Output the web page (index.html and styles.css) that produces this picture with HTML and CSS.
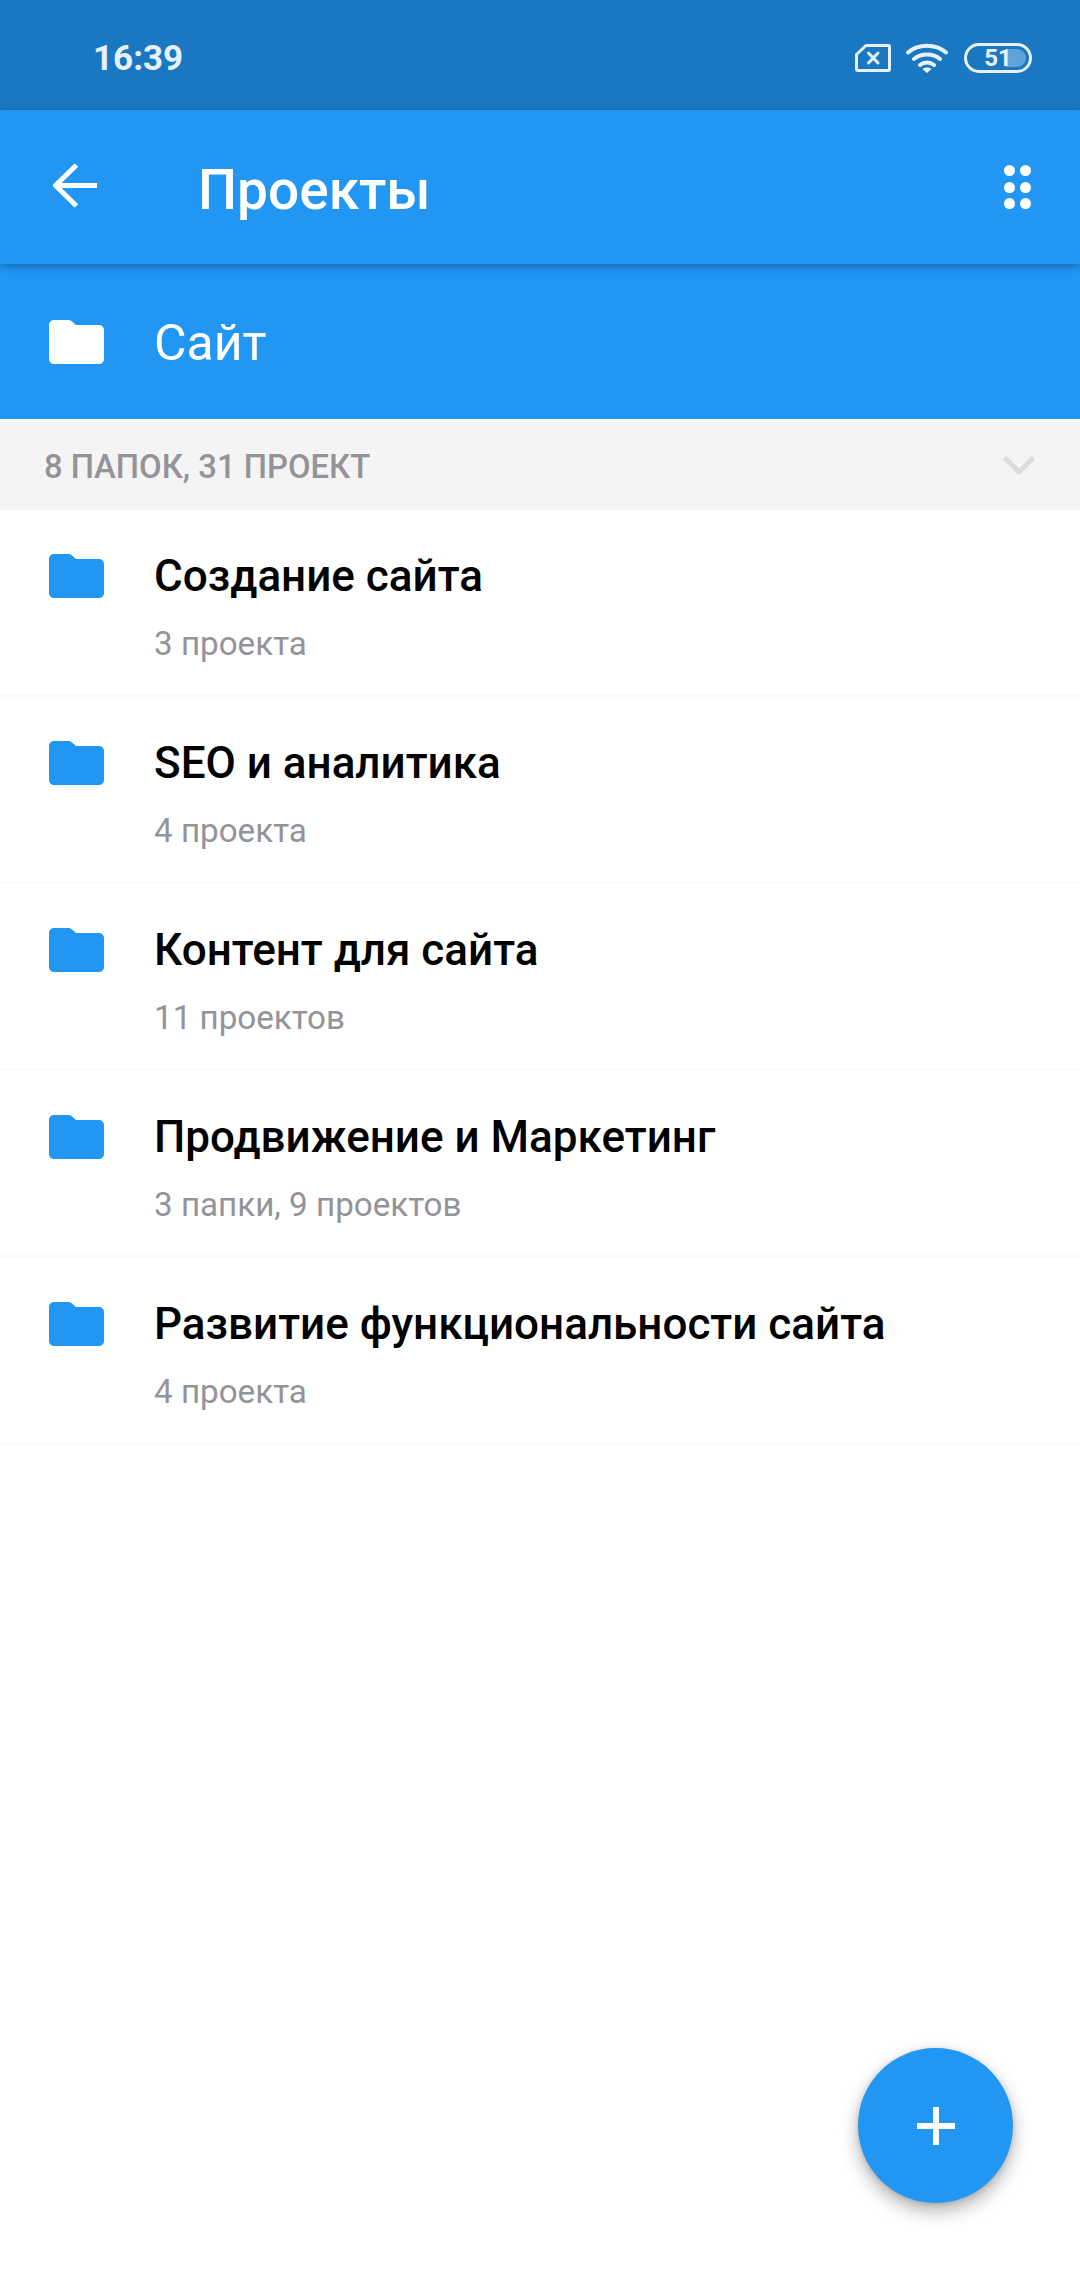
FILE: index.html
```html
<!doctype html>
<html lang="ru">
<head>
	<meta charset="UTF-8">
	<meta name="viewport" content="initial-scale=1,maximum-scale=1, user-scalable=no">
	<title>Проекты</title>
	<link rel="stylesheet" href="styles.css">
</head>
<body>
	<svg class="defs" width="0" height="0">
		<symbol id="folder" viewBox="0 0 55 44">
			<path d="M5 0h14c2 0 3 .6 4.300 1.800L27 5h23c2.800 0 5 2.200 5 5v29c0 2.800-2.200 5-5 5H5c-2.800 0-5-2.200-5-5V5c0-2.800 2.200-5 5-5z"/>
		</symbol>
	</svg>
	<div class="wrap">
		<div class="status-bar">
			<span class="time">16:39</span>
			<div class="status-icons">
				<svg class="ic-sim" width="36" height="28" viewBox="0 0 36 28">
					<path d="M11 1.500h22c.8 0 1.500.7 1.500 1.500v22c0 .8-.7 1.500-1.500 1.500H3c-.8 0-1.500-.7-1.500-1.500V10.500z" fill="none" stroke="#e8f1f9" stroke-width="3" stroke-linejoin="round"/>
					<path d="M13.500 9l9.500 10M23 9l-9.500 10" stroke="#e8f1f9" stroke-width="3" stroke-linecap="round"/>
				</svg>
				<svg class="ic-wifi" width="42" height="30" viewBox="0 0 42 30">
					<path d="M2 9.500C12.500 .5 29.500 .5 40 9.500M8 16C15 10 27 10 34 16M14 22c4-3.200 10-3.200 14 0" fill="none" stroke="#e8f1f9" stroke-width="4" stroke-linecap="round"/>
					<path d="M21 30l-4.500-4c2.500-2 6.500-2 9 0z" fill="#e8f1f9"/>
				</svg>
				<div class="battery">
					<div class="battery-fill"></div>
					<span class="battery-num">51</span>
				</div>
			</div>
		</div>

		<div class="toolbar">
			<svg class="ic-back" width="44" height="44" viewBox="0 0 44 44">
				<path d="M2 21.500h42M23.500 1L2.500 21.500 23.500 42" fill="none" stroke="#fff" stroke-width="5"/>
			</svg>
			<h1 class="toolbar-title">Проекты</h1>
			<div class="dots">
				<i></i><i></i><i></i><i></i><i></i><i></i>
			</div>
		</div>

		<div class="current-folder">
			<svg class="folder-icon"><use href="#folder"/></svg>
			<span class="current-name">Сайт</span>
		</div>

		<div class="section-head">
			<span class="section-title">8 ПАПОК, 31 ПРОЕКТ</span>
			<svg class="ic-chevron" width="32" height="20" viewBox="0 0 32 20">
				<path d="M3 3l13 13L29 3" fill="none" stroke="#dcdcdc" stroke-width="5" stroke-linecap="round" stroke-linejoin="round"/>
			</svg>
		</div>

		<ul class="list">
			<li class="row">
				<svg class="folder-icon"><use href="#folder"/></svg>
				<div class="row-text">
					<div class="row-title">Создание сайта</div>
					<div class="row-sub">3 проекта</div>
				</div>
			</li>
			<li class="row">
				<svg class="folder-icon"><use href="#folder"/></svg>
				<div class="row-text">
					<div class="row-title">SEO и аналитика</div>
					<div class="row-sub">4 проекта</div>
				</div>
			</li>
			<li class="row">
				<svg class="folder-icon"><use href="#folder"/></svg>
				<div class="row-text">
					<div class="row-title">Контент для сайта</div>
					<div class="row-sub">11 проектов</div>
				</div>
			</li>
			<li class="row">
				<svg class="folder-icon"><use href="#folder"/></svg>
				<div class="row-text">
					<div class="row-title">Продвижение и Маркетинг</div>
					<div class="row-sub">3 папки, 9 проектов</div>
				</div>
			</li>
			<li class="row">
				<svg class="folder-icon"><use href="#folder"/></svg>
				<div class="row-text">
					<div class="row-title">Развитие функциональности сайта</div>
					<div class="row-sub">4 проекта</div>
				</div>
			</li>
		</ul>

		<button type="button" class="fab">
			<svg width="38" height="38" viewBox="0 0 38 38">
				<path d="M16 0h6v16h16v6H22v16h-6V22H0v-6h16z" fill="#fff"/>
			</svg>
		</button>
	</div>
</body>
</html>
```

FILE: styles.css
```css
*{
	margin:0;
	padding:0;
	box-sizing:border-box;
}
html, body{
	height:100%;
	background:#fff;
	font-family:Roboto, "Noto Sans", sans-serif;
}
.defs{
	position:absolute;
}
.wrap{
	position:relative;
	height:2280px;
	overflow:hidden;
}

/* status bar */
.status-bar{
	height:110px;
	background:#1a78c2;
	display:flex;
	align-items:center;
	justify-content:space-between;
	padding:0 48px 0 93px;
	color:#e8f1f9;
}
.time{
	font-size:35px;
	font-weight:700;
	margin-top:7px;
}
.status-icons{
	display:flex;
	align-items:center;
	margin-top:6px;
}
.ic-sim{
	margin-right:15px;
}
.ic-wifi{
	margin-right:16px;
}
.battery{
	position:relative;
	width:68px;
	height:30px;
	border:3px solid #e8f1f9;
	border-radius:15px;
	display:flex;
	align-items:center;
	justify-content:center;
}
.battery-fill{
	position:absolute;
	right:3px;
	top:3px;
	bottom:3px;
	width:20px;
	background:#5fa3d8;
	border-radius:0 9px 9px 0;
}
.battery-num{
	position:relative;
	font-size:24px;
	font-weight:700;
	line-height:1;
}

/* toolbar */
.toolbar{
	position:relative;
	z-index:2;
	height:154px;
	background:#2196f3;
	display:flex;
	align-items:center;
	padding:0 49px 0 53px;
	box-shadow:0 3px 8px rgba(0,0,0,.28);
}
.ic-back{
	margin-top:-2px;
}
.toolbar-title{
	font-size:55px;
	font-weight:500;
	color:#fff;
	margin-left:101px;
	margin-top:6px;
	flex:1;
}
.dots{
	display:grid;
	grid-template-columns:11px 11px;
	gap:5.500px;
}
.dots i{
	width:11px;
	height:11px;
	border-radius:50%;
	background:#fff;
}

/* current folder */
.current-folder{
	height:155px;
	background:#2196f3;
	display:flex;
	align-items:center;
	padding-left:49px;
	color:#fff;
	fill:#fff;
}
.folder-icon{
	width:55px;
	height:44px;
	flex:none;
	fill:inherit;
}
.current-name{
	font-size:50px;
	margin-left:50px;
	margin-top:2px;
}

/* section header */
.section-head{
	margin-top:3px;
	height:88px;
	background:#f4f4f4;
	display:flex;
	align-items:center;
	justify-content:space-between;
	padding:0 45px 0 44px;
}
.section-title{
	font-size:32.800px;
	font-weight:500;
	color:#939398;
	margin-top:2px;
}

/* list */
.list{
	list-style:none;
}
.row{
	height:187px;
	border-bottom:3px solid #fafafa;
	display:flex;
	align-items:flex-start;
	padding:44px 0 0 49px;
	fill:#2196f3;
}
.row-text{
	margin-left:50px;
	margin-top:-3px;
}
.row-title{
	font-size:44px;
	font-weight:500;
	line-height:50px;
	color:#000;
}
.row-sub{
	font-size:33.200px;
	line-height:38px;
	color:#939398;
	margin-top:24px;
}

/* add button */
.fab{
	position:absolute;
	left:858px;
	top:2048px;
	width:155px;
	height:155px;
	border:none;
	border-radius:50%;
	background:#2196f3;
	display:flex;
	align-items:center;
	justify-content:center;
	box-shadow:0 8px 18px rgba(0,0,0,.3), 0 1px 5px rgba(0,0,0,.15);
}
```
